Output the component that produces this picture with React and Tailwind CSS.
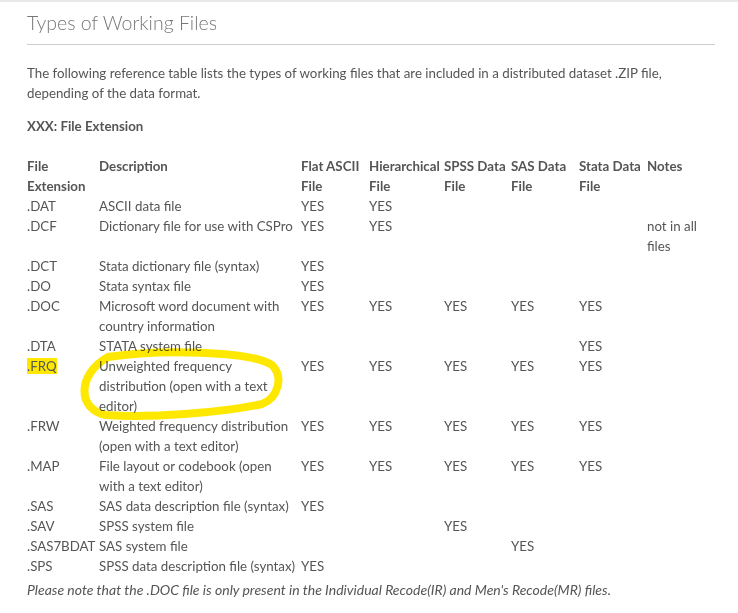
const rows = [
  { ext: ".DAT", desc: ["ASCII data file"], flat: "YES", hier: "YES" },
  { ext: ".DCF", desc: ["Dictionary file for use with CSPro"], flat: "YES", hier: "YES", notes: ["not in all", "files"] },
  { ext: ".DCT", desc: ["Stata dictionary file (syntax)"], flat: "YES" },
  { ext: ".DO", desc: ["Stata syntax file"], flat: "YES" },
  { ext: ".DOC", desc: ["Microsoft word document with", "country information"], flat: "YES", hier: "YES", spss: "YES", sas: "YES", stata: "YES" },
  { ext: ".DTA", desc: ["STATA system file"], stata: "YES" },
  { ext: ".FRQ", mark: true, desc: ["Unweighted frequency", "distribution (open with a text", "editor)"], flat: "YES", hier: "YES", spss: "YES", sas: "YES", stata: "YES" },
  { ext: ".FRW", desc: ["Weighted frequency distribution", "(open with a text editor)"], flat: "YES", hier: "YES", spss: "YES", sas: "YES", stata: "YES" },
  { ext: ".MAP", desc: ["File layout or codebook (open", "with a text editor)"], flat: "YES", hier: "YES", spss: "YES", sas: "YES", stata: "YES" },
  { ext: ".SAS", desc: ["SAS data description file (syntax)"], flat: "YES" },
  { ext: ".SAV", desc: ["SPSS system file"], spss: "YES" },
  { ext: ".SAS7BDAT", desc: ["SAS system file"], sas: "YES" },
  { ext: ".SPS", desc: ["SPSS data description file (syntax)"], flat: "YES" },
];

const Lines = ({ lines }) =>
  lines ? lines.map((l, i) => <div key={i} className="whitespace-nowrap">{l}</div>) : null;

const App = () => {
  return (
    <div
      className="min-h-screen bg-white border-t-2 border-[#e8e8e8] text-[#555] text-[13.3px] leading-[20px]"
      style={{ fontFamily: "Lato, 'Open Sans', sans-serif" }}
    >
      <div className="relative pl-[27px] pr-[23px]">
        <h2 className="pt-[8px] pb-[8px] text-[19.5px] leading-[26px] font-light text-[#777] border-b border-[#ccc]">
          Types of Working Files
        </h2>
        <p className="mt-[18px]">
          The following reference table lists the types of working files that are included in a distributed dataset .ZIP file,
          depending of the data format.
        </p>
        <p className="mt-[13px] font-bold">XXX: File Extension</p>

        <table className="mt-[20px] table-fixed border-collapse w-[688px]">
          <colgroup>
            <col className="w-[72px]" />
            <col className="w-[202px]" />
            <col className="w-[68px]" />
            <col className="w-[75px]" />
            <col className="w-[67px]" />
            <col className="w-[68px]" />
            <col className="w-[68px]" />
            <col className="w-[68px]" />
          </colgroup>
          <thead>
            <tr className="font-bold text-left align-top">
              <th className="p-0"><Lines lines={["File", "Extension"]} /></th>
              <th className="p-0">Description</th>
              <th className="p-0"><Lines lines={["Flat ASCII", "File"]} /></th>
              <th className="p-0"><Lines lines={["Hierarchical", "File"]} /></th>
              <th className="p-0"><Lines lines={["SPSS Data", "File"]} /></th>
              <th className="p-0"><Lines lines={["SAS Data", "File"]} /></th>
              <th className="p-0"><Lines lines={["Stata Data", "File"]} /></th>
              <th className="p-0">Notes</th>
            </tr>
          </thead>
          <tbody>
            {rows.map((r) => (
              <tr key={r.ext} className="align-top">
                <td className="p-0">
                  {r.mark ? <span className="bg-[#ffe800]">{r.ext}</span> : r.ext}
                </td>
                <td className="p-0"><Lines lines={r.desc} /></td>
                <td className="p-0">{r.flat}</td>
                <td className="p-0">{r.hier}</td>
                <td className="p-0">{r.spss}</td>
                <td className="p-0">{r.sas}</td>
                <td className="p-0">{r.stata}</td>
                <td className="p-0"><Lines lines={r.notes} /></td>
              </tr>
            ))}
          </tbody>
        </table>

        <p className="mt-[4px] italic text-[14px]">
          Please note that the .DOC file is only present in the Individual Recode(IR) and Men's Recode(MR) files.
        </p>

        {/* hand-drawn highlight loop around the .FRQ description */}
        <svg className="absolute left-0 top-0 pointer-events-none mix-blend-multiply" width="738" height="613">
          <path
            d="M108 355 C160 347 250 349 272 363 C284 375 278 396 262 402 C220 411 150 416 106 413 C78 408 76 373 108 355"
            fill="none"
            stroke="#ffe800"
            strokeWidth="8"
            strokeLinecap="round"
          />
        </svg>
      </div>
    </div>
  );
};

export default App;
